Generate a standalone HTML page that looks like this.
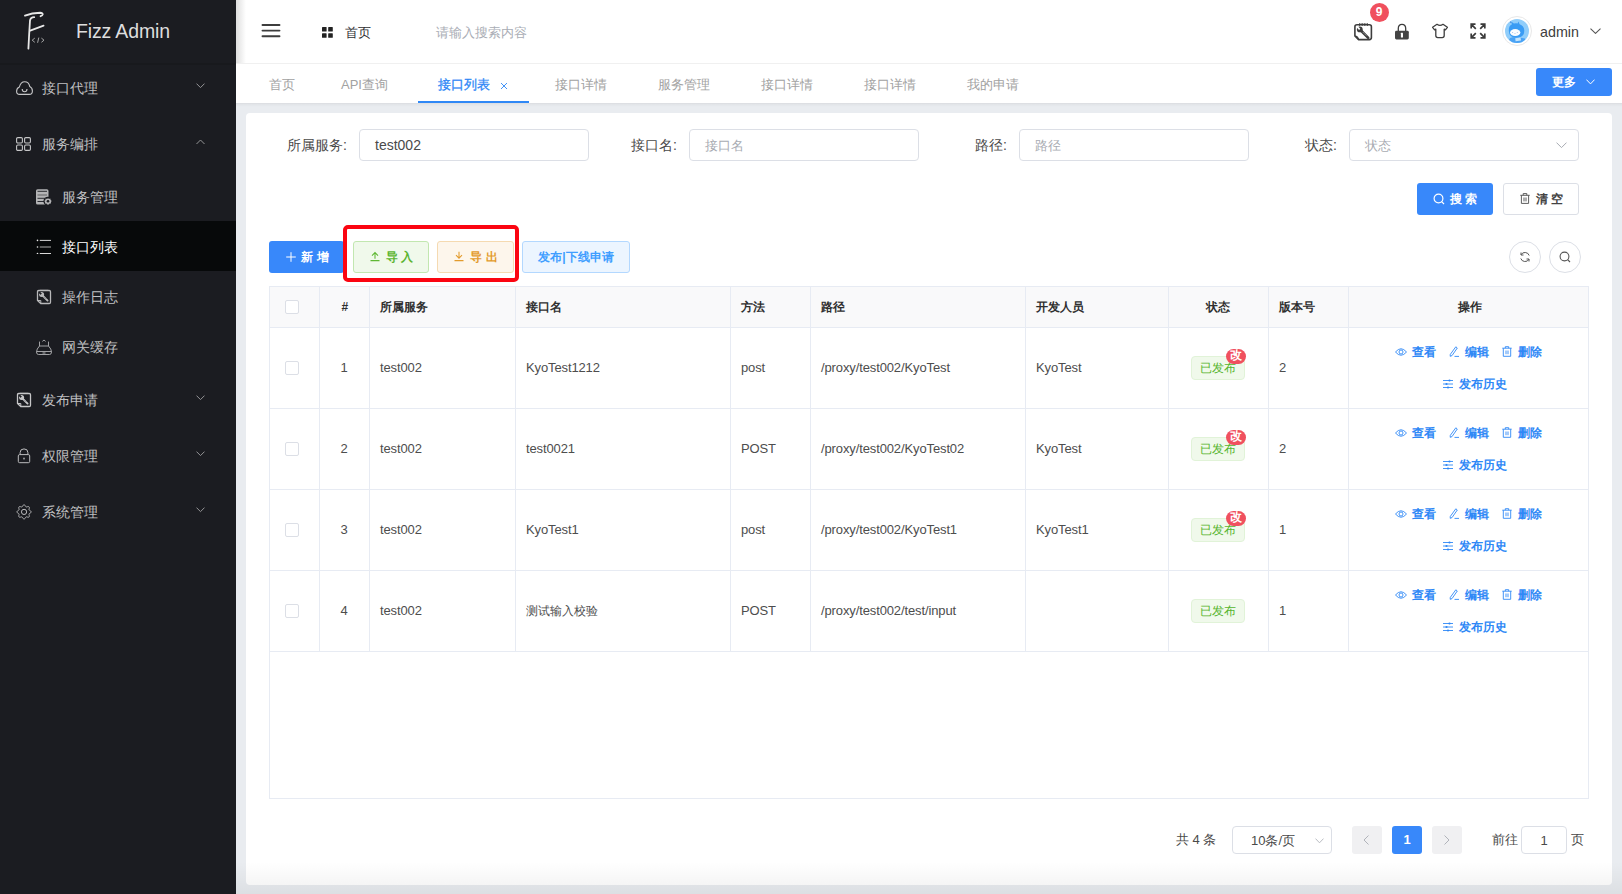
<!DOCTYPE html>
<html><head><meta charset="utf-8">
<style>
*{box-sizing:border-box;margin:0;padding:0}
html,body{width:1622px;height:894px;overflow:hidden;background:#e9ecf0;font-family:"Liberation Sans",sans-serif;color:#303133}
.abs{position:absolute}
#side{position:absolute;left:0;top:0;width:236px;height:894px;background:#1b1c21}
#logo{position:absolute;left:0;top:0;width:236px;height:65px;background:#1b1c21;border-bottom:2px solid #18191d}
#logo .t{position:absolute;left:76px;top:20px;font-size:19.5px;letter-spacing:-0.15px;color:#dedede;white-space:nowrap}
.mi{position:absolute;left:0;width:236px;font-size:14px;color:#c0c0c2;white-space:nowrap}
.mi .tx{position:absolute;top:0}
.mi svg{position:absolute}
.mi .ar{position:absolute;left:195px}
.sub.active{background:#07090a;color:#fff}
#header{position:absolute;left:236px;top:0;width:1386px;height:64px;background:#fff;border-bottom:1px solid #f0f0f0}
#tabs{position:absolute;left:236px;top:64px;width:1386px;height:40px;background:#fff;border-bottom:1px solid #dddfe3}
.tab{position:absolute;top:76px;font-size:13px;color:#a2a2a2;white-space:nowrap;line-height:16px}
#card{position:absolute;left:246px;top:113px;width:1366px;height:772px;background:#fff;border-radius:4px}
.lbl{position:absolute;font-size:14px;color:#4a4a4a;white-space:nowrap;line-height:16px}
.inp{position:absolute;height:32px;border:1px solid #dcdfe6;border-radius:4px;background:#fff;font-size:14px;line-height:31px;padding-left:15px;white-space:nowrap}
.ph{color:#a8abb2;font-size:13px !important}
.btn{position:absolute;height:32px;border-radius:3px;font-size:12px;line-height:30px;text-align:center;white-space:nowrap;border:1px solid transparent}
table{border-collapse:collapse}
.cell{position:absolute;font-size:13px;color:#4d4d4d;white-space:nowrap;line-height:16px;letter-spacing:-0.12px}
.hcell{position:absolute;font-size:12px;color:#2f2f2f;font-weight:bold;white-space:nowrap;line-height:16px}
.vl{position:absolute;width:1px;background:#e6e9f0}
.hl{position:absolute;height:1px;background:#e6e9f0}
.cb{position:absolute;width:14px;height:14px;border:1px solid #dcdfe6;border-radius:2px;background:#fff}
.tag{position:absolute;width:54px;height:24px;background:#f0f9eb;border:1px solid #e1f3d8;border-radius:4px;color:#56b52e;font-size:12px;line-height:22px;text-align:center}
.bdg{position:absolute;width:20px;height:15px;border-radius:7.5px;background:#f0505e;color:#fff;font-size:12px;font-weight:bold;line-height:13px;text-align:center;overflow:hidden}
.act{position:absolute;font-size:12px;font-weight:bold;color:#2f88f6;white-space:nowrap;line-height:16px}
</style></head><body>
<div id="side">
  <div id="logo">
    <svg class="abs" style="left:23px;top:11px" width="24" height="40" viewBox="0 0 24 40">
      <path d="M2 4.6 Q9 1.8 17.2 1.7 Q19.8 1.8 19.7 3.4 Q19.4 4.7 17.6 5.2" stroke="#e8e8e8" stroke-width="1.9" fill="none" stroke-linecap="round"/>
      <path d="M11.2 6.2 Q7.6 6.2 7 9.5 Q6.2 22 5.4 37.6" stroke="#e8e8e8" stroke-width="1.8" fill="none" stroke-linecap="round"/>
      <path d="M7.2 19.6 L20.6 14.6" stroke="#e8e8e8" stroke-width="1.7" fill="none" stroke-linecap="round"/>
      <path d="M11.8 27.1 L9.2 29.2 L11.8 31.3 M15.8 26.6 L14.6 31.8 M18.4 27.1 L21 29.2 L18.4 31.3" stroke="#ababab" stroke-width="0.95" fill="none"/>
    </svg>
    <div class="t">Fizz Admin</div>
  </div>
  <div class="mi" style="top:59px;height:56px">
    <svg style="left:15.5px;top:21.5px" width="17" height="15" viewBox="0 0 17 15"><path d="M3.6 13.4 Q0.6 13.4 0.6 10.2 Q0.6 7.2 3.4 6 Q4.6 0.8 8.7 0.8 Q12.8 0.8 13.8 5.6 Q16.4 7 16.4 10 Q16.4 13.4 13.2 13.4 Z" fill="none" stroke="#c6c6c8" stroke-width="1.1" stroke-linejoin="round"/><path d="M6.2 8 Q6.3 10.8 8.6 10.8 Q10.9 10.8 11 8" fill="none" stroke="#c6c6c8" stroke-width="1.1"/></svg>
    <span class="tx" style="left:42px;top:21px">接口代理</span>
    <svg class="ar" style="top:24px;left:195.5px" width="9" height="6" viewBox="0 0 9 6"><path d="M0.5 0.6 L4.5 4.6 L8.5 0.6" fill="none" stroke="#949496" stroke-width="1"/></svg>
  </div>
  <div class="mi" style="top:115px;height:56px">
    <svg style="left:16px;top:22px" width="15" height="14" viewBox="0 0 15 14"><rect x="0.6" y="0.6" width="5.8" height="5.4" rx="1.2" fill="none" stroke="#c6c6c8" stroke-width="1.1"/><rect x="8.6" y="0.6" width="5.8" height="5.4" rx="1.2" fill="none" stroke="#c6c6c8" stroke-width="1.1"/><rect x="0.6" y="8" width="5.8" height="5.4" rx="1.2" fill="none" stroke="#c6c6c8" stroke-width="1.1"/><rect x="8.6" y="8" width="5.8" height="5.4" rx="1.2" fill="none" stroke="#c6c6c8" stroke-width="1.1"/></svg>
    <span class="tx" style="left:42px;top:21px">服务编排</span>
    <svg class="ar" style="top:24px;left:195.5px" width="9" height="6" viewBox="0 0 9 6"><path d="M0.5 5 L4.5 1 L8.5 5" fill="none" stroke="#949496" stroke-width="1"/></svg>
  </div>
  <div class="mi sub" style="top:171px;height:50px">
    <svg style="left:35px;top:18px" width="18" height="16" viewBox="0 0 18 16"><rect x="1" y="0.3" width="12.5" height="15.3" rx="1.6" fill="#b4b4b6"/><path d="M2.5 2.3 H12 M2.5 9.3 H12 M2.5 12.5 H10" stroke="#1b1c21" stroke-width="0.9"/><rect x="2.5" y="5" width="9.5" height="2" fill="#8a8a8c"/><circle cx="13" cy="12.3" r="4.6" fill="#1b1c21"/><path d="M13 8.9 L13.9 9.9 L15.3 9.6 L15.6 11 L16.7 11.9 L15.9 13 L16 14.4 L14.6 14.6 L13.8 15.7 L13 15.2 L12.2 15.7 L11.4 14.6 L10 14.4 L10.1 13 L9.3 11.9 L10.4 11 L10.7 9.6 L12.1 9.9 Z" fill="#b4b4b6"/><circle cx="13" cy="12.3" r="1.3" fill="#1b1c21"/></svg>
    <span class="tx" style="left:62px;top:18px">服务管理</span>
  </div>
  <div class="mi sub active" style="top:221px;height:50px">
    <svg style="left:36px;top:18px" width="16" height="15" viewBox="0 0 16 15"><circle cx="1.5" cy="1.4" r="0.8" fill="#e6e6e6"/><circle cx="1.5" cy="8" r="0.8" fill="#e6e6e6"/><circle cx="1.5" cy="14.5" r="0.8" fill="#e6e6e6"/><path d="M3.8 1.4 H15 M3.8 14.5 H15" stroke="#d8d8d8" stroke-width="1"/><path d="M3.8 8 H15" stroke="#888" stroke-width="1.3"/></svg>
    <span class="tx" style="left:62px;top:18px">接口列表</span>
  </div>
  <div class="mi sub" style="top:271px;height:50px">
    <svg style="left:36px;top:18px" width="16" height="16" viewBox="0 0 16 16"><path d="M5 0.6 V2 M7 0.6 V2 M9 0.6 V2 M11 0.6 V2" stroke="#b8b8ba" stroke-width="0.8"/><path d="M2.8 1.5 H13.2 Q14.5 1.5 14.5 2.8 V13.2 Q14.5 14.5 13.2 14.5 H4.8 L1.5 11.5 V2.8 Q1.5 1.5 2.8 1.5 Z" fill="none" stroke="#b8b8ba" stroke-width="1.3"/><path d="M1.5 11.5 H4.8 V14.5" fill="none" stroke="#b8b8ba" stroke-width="1"/><circle cx="5.6" cy="5.6" r="2.5" fill="#b8b8ba"/><path d="M3.4 3.4 L5.4 5.4" stroke="#1b1c21" stroke-width="1.5"/><path d="M6 6 L11.6 11.6" stroke="#b8b8ba" stroke-width="1.9" stroke-linecap="round"/><path d="M8 8.6 L8.6 8 M9.4 10 L10 9.4" stroke="#1b1c21" stroke-width="0.6"/></svg>
    <span class="tx" style="left:62px;top:18px">操作日志</span>
  </div>
  <div class="mi sub" style="top:321px;height:50px">
    <svg style="left:36px;top:18px" width="16" height="16" viewBox="0 0 16 16"><path d="M6.4 2.4 L8 1 L9.6 2.4" fill="none" stroke="#b0b0b2" stroke-width="0.9"/><path d="M3.5 2.6 V7 M12.5 2.6 V7" stroke="#b0b0b2" stroke-width="0.9"/><path d="M3.5 7 H12.5 Q15.5 10 15.5 13 Q15.5 15.5 13.5 15.5 H2.5 Q0.5 15.5 0.5 13 Q0.5 10 3.5 7 Z" fill="none" stroke="#b0b0b2" stroke-width="0.9"/><path d="M0.8 12.5 H15.2" stroke="#b0b0b2" stroke-width="0.9"/><path d="M6.5 14 H9.5" stroke="#b0b0b2" stroke-width="1"/></svg>
    <span class="tx" style="left:62px;top:18px">网关缓存</span>
  </div>
  <div class="mi" style="top:371px;height:56px">
    <svg style="left:16px;top:21px" width="16" height="16" viewBox="0 0 16 16"><path d="M5 0.6 V2 M7 0.6 V2 M9 0.6 V2 M11 0.6 V2" stroke="#c6c6c8" stroke-width="0.8"/><path d="M2.8 1.5 H13.2 Q14.5 1.5 14.5 2.8 V13.2 Q14.5 14.5 13.2 14.5 H4.8 L1.5 11.5 V2.8 Q1.5 1.5 2.8 1.5 Z" fill="none" stroke="#c6c6c8" stroke-width="1.3"/><path d="M1.5 11.5 H4.8 V14.5" fill="none" stroke="#c6c6c8" stroke-width="1"/><circle cx="5.6" cy="5.6" r="2.5" fill="#c6c6c8"/><path d="M3.4 3.4 L5.4 5.4" stroke="#1b1c21" stroke-width="1.5"/><path d="M6 6 L11.6 11.6" stroke="#c6c6c8" stroke-width="1.9" stroke-linecap="round"/><path d="M8 8.6 L8.6 8 M9.4 10 L10 9.4" stroke="#1b1c21" stroke-width="0.6"/></svg>
    <span class="tx" style="left:42px;top:21px">发布申请</span>
    <svg class="ar" style="top:24px;left:195.5px" width="9" height="6" viewBox="0 0 9 6"><path d="M0.5 0.6 L4.5 4.6 L8.5 0.6" fill="none" stroke="#949496" stroke-width="1"/></svg>
  </div>
  <div class="mi" style="top:427px;height:56px">
    <svg style="left:17px;top:21px" width="14" height="16" viewBox="0 0 14 16"><path d="M3.1 6.6 V4.6 Q3.1 0.9 7 0.9 Q10.9 0.9 10.9 4.6 V6.6" fill="none" stroke="#bdbdbf" stroke-width="1"/><rect x="1.3" y="6.6" width="11.4" height="8.1" rx="1.3" fill="none" stroke="#bdbdbf" stroke-width="1"/><rect x="6.3" y="9.7" width="1.4" height="1.7" fill="#bdbdbf"/></svg>
    <span class="tx" style="left:42px;top:21px">权限管理</span>
    <svg class="ar" style="top:24px;left:195.5px" width="9" height="6" viewBox="0 0 9 6"><path d="M0.5 0.6 L4.5 4.6 L8.5 0.6" fill="none" stroke="#949496" stroke-width="1"/></svg>
  </div>
  <div class="mi" style="top:483px;height:56px">
    <svg style="left:16px;top:21px" width="16" height="16" viewBox="0 0 16 16"><path d="M8.05 0.80 L8.33 0.85 L8.59 0.98 L8.84 1.20 L9.07 1.47 L9.27 1.77 L9.45 2.08 L9.61 2.37 L9.77 2.61 L9.93 2.79 L10.12 2.91 L10.33 2.96 L10.58 2.94 L10.86 2.88 L11.18 2.79 L11.52 2.70 L11.88 2.63 L12.23 2.60 L12.56 2.62 L12.84 2.72 L13.07 2.88 L13.23 3.11 L13.33 3.39 L13.35 3.72 L13.32 4.07 L13.25 4.43 L13.16 4.77 L13.07 5.09 L13.01 5.37 L12.99 5.62 L13.04 5.83 L13.16 6.02 L13.34 6.18 L13.58 6.34 L13.87 6.50 L14.18 6.68 L14.48 6.88 L14.75 7.11 L14.97 7.36 L15.10 7.62 L15.15 7.90 L15.10 8.18 L14.97 8.44 L14.75 8.69 L14.48 8.92 L14.18 9.12 L13.87 9.30 L13.58 9.46 L13.34 9.62 L13.16 9.78 L13.04 9.97 L12.99 10.18 L13.01 10.43 L13.07 10.71 L13.16 11.03 L13.25 11.37 L13.32 11.73 L13.35 12.08 L13.33 12.41 L13.23 12.69 L13.07 12.92 L12.84 13.08 L12.56 13.18 L12.23 13.20 L11.88 13.17 L11.52 13.10 L11.18 13.01 L10.86 12.92 L10.58 12.86 L10.33 12.84 L10.12 12.89 L9.93 13.01 L9.77 13.19 L9.61 13.43 L9.45 13.72 L9.27 14.03 L9.07 14.33 L8.84 14.60 L8.59 14.82 L8.33 14.95 L8.05 15.00 L7.77 14.95 L7.51 14.82 L7.26 14.60 L7.03 14.33 L6.83 14.03 L6.65 13.72 L6.49 13.43 L6.33 13.19 L6.17 13.01 L5.98 12.89 L5.77 12.84 L5.52 12.86 L5.24 12.92 L4.92 13.01 L4.58 13.10 L4.22 13.17 L3.87 13.20 L3.54 13.18 L3.26 13.08 L3.03 12.92 L2.87 12.69 L2.77 12.41 L2.75 12.08 L2.78 11.73 L2.85 11.37 L2.94 11.03 L3.03 10.71 L3.09 10.43 L3.11 10.18 L3.06 9.97 L2.94 9.78 L2.76 9.62 L2.52 9.46 L2.23 9.30 L1.92 9.12 L1.62 8.92 L1.35 8.69 L1.13 8.44 L1.00 8.18 L0.95 7.90 L1.00 7.62 L1.13 7.36 L1.35 7.11 L1.62 6.88 L1.92 6.68 L2.23 6.50 L2.52 6.34 L2.76 6.18 L2.94 6.02 L3.06 5.83 L3.11 5.62 L3.09 5.37 L3.03 5.09 L2.94 4.77 L2.85 4.43 L2.78 4.07 L2.75 3.72 L2.77 3.39 L2.87 3.11 L3.03 2.88 L3.26 2.72 L3.54 2.62 L3.87 2.60 L4.22 2.63 L4.58 2.70 L4.92 2.79 L5.24 2.88 L5.52 2.94 L5.77 2.96 L5.98 2.91 L6.17 2.79 L6.33 2.61 L6.49 2.37 L6.65 2.08 L6.83 1.77 L7.03 1.47 L7.26 1.20 L7.51 0.98 L7.77 0.85 Z" fill="none" stroke="#bdbdbf" stroke-width="1"/><circle cx="8.05" cy="7.9" r="2.6" fill="none" stroke="#bdbdbf" stroke-width="1"/></svg>
    <span class="tx" style="left:42px;top:21px">系统管理</span>
    <svg class="ar" style="top:24px;left:195.5px" width="9" height="6" viewBox="0 0 9 6"><path d="M0.5 0.6 L4.5 4.6 L8.5 0.6" fill="none" stroke="#949496" stroke-width="1"/></svg>
  </div>
</div>
<div id="header">
  <div class="abs" style="left:0;top:0;width:10px;height:63px;background:linear-gradient(to right,rgba(0,0,0,0.13),rgba(0,0,0,0))"></div>
  <svg class="abs" style="left:25px;top:23px" width="20" height="16" viewBox="0 0 20 16"><path d="M1.5 2 H18.5 M1.5 7.6 H18.5 M1.5 13.2 H18.5" stroke="#3d3d3d" stroke-width="1.9" stroke-linecap="round"/></svg>
  <svg class="abs" style="left:86px;top:27px" width="11" height="11" viewBox="0 0 11 11"><rect x="0" y="0" width="4.6" height="4.6" rx="0.6" fill="#222"/><rect x="6.2" y="0" width="4.6" height="4.6" rx="0.6" fill="#222"/><rect x="0" y="6.2" width="4.6" height="4.6" rx="0.6" fill="#222"/><rect x="6.2" y="6.2" width="4.6" height="4.6" rx="0.6" fill="#222"/></svg>
  <div class="abs" style="left:109px;top:25px;font-size:13px;color:#303133;line-height:16px">首页</div>
  <div class="abs" style="left:200px;top:25px;font-size:13px;color:#a9adb5;line-height:16px">请输入搜索内容</div>
  <!-- right icons -->
  <svg class="abs" style="left:1118px;top:23px" width="19" height="18" viewBox="0 0 19 18"><path d="M3 1.8 H15.4 Q17.4 1.8 17.4 3.8 V14.6 Q17.4 16.6 15.4 16.6 H4.6 L0.9 13 V3.8 Q0.9 1.8 3 1.8 Z" fill="none" stroke="#3d3d3d" stroke-width="1.6" stroke-linejoin="round"/><path d="M1 13.2 Q3.8 13.4 4.6 16.5" fill="none" stroke="#3d3d3d" stroke-width="1.2"/><path d="M5.6 0.2 V3 M8.2 0.2 V3 M10.8 0.2 V3 M13.4 0.2 V3 M5.6 1.2 H13.4" stroke="#3d3d3d" stroke-width="0.9"/><circle cx="5.8" cy="6.4" r="2.9" fill="#3d3d3d"/><path d="M3.3 3.9 L5.7 6.3" stroke="#fff" stroke-width="1.7"/><path d="M7.4 8 L14.2 14.8" stroke="#3d3d3d" stroke-width="2.6" stroke-linecap="round"/><path d="M9.2 9.4 L10.2 10.4 M11.2 11.4 L12.2 12.4" stroke="#fff" stroke-width="0.7"/></svg>
  <div class="abs" style="left:1133.5px;top:2.5px;width:19px;height:19px;border-radius:10px;background:#f0505e;color:#fff;font-size:12px;font-weight:bold;line-height:19px;text-align:center">9</div>
  <svg class="abs" style="left:1158px;top:23px" width="16" height="18" viewBox="0 0 16 18"><path d="M4.3 8.4 V5.6 Q4.3 1.4 8 1.4 Q11.7 1.4 11.7 5.6 V8.4" fill="none" stroke="#3d3d3d" stroke-width="1.3"/><rect x="1" y="7.8" width="13.8" height="8.6" rx="1.4" fill="#444"/><rect x="6.9" y="9.8" width="2.1" height="4.6" rx="0.5" fill="#fff"/></svg>
  <svg class="abs" style="left:1195px;top:23px" width="18" height="16" viewBox="0 0 18 16"><path d="M6 1.3 Q9 3.6 12 1.3 L16.4 4.3 L14.4 6.8 L13.2 6.2 V12.6 Q13.2 14.6 11.2 14.6 H6.8 Q4.8 14.6 4.8 12.6 V6.2 L3.6 6.8 L1.6 4.3 Z" fill="none" stroke="#3d3d3d" stroke-width="1.3" stroke-linejoin="round"/></svg>
  <svg class="abs" style="left:1234px;top:23px" width="16" height="16" viewBox="0 0 16 16"><path d="M1.2 5.5 V1.2 H5.5 M1.2 1.2 L5.8 5.8 M10.5 1.2 H14.8 V5.5 M14.8 1.2 L10.2 5.8 M1.2 10.5 V14.8 H5.5 M1.2 14.8 L5.8 10.2 M14.8 10.5 V14.8 H10.5 M14.8 14.8 L10.2 10.2" fill="none" stroke="#3a3a3a" stroke-width="1.7"/></svg>
  <div class="abs" style="left:1266px;top:16px;width:30px;height:30px;border-radius:15px;background:#fff;border:1px solid #e8e8e8"></div>
  <div class="abs" style="left:1269px;top:19px;width:24px;height:24px;border-radius:12px;overflow:hidden"><svg width="24" height="24" viewBox="0 0 24 24" style="display:block"><g><rect width="24" height="24" fill="#90cdfa"/><path d="M3.8 11.5 Q3.6 6.5 7 5.2 L6.2 2.6 L8.8 4.6 Q11 4.1 12.6 4.5 L13.4 2.4 L14.6 5.2 Q19 6.6 19.3 11.5 Q19.3 16.5 15.5 18 Q11 19 7.5 18 Q3.9 16.5 3.8 11.5 Z" fill="#3a9cf4"/><ellipse cx="10.2" cy="13.6" rx="5.2" ry="3.5" fill="#fbfdff"/><path d="M7.4 13.2 L7.9 14 M12.2 13.2 L12.6 14 M9.6 14.6 Q10 15 10.4 14.6" stroke="#6b8fd0" stroke-width="0.6" fill="none"/><path d="M2.5 24 L5 19 Q9 17.5 14 18.5 L20 19.5 L21 24 Z" fill="#4aa3f5"/><path d="M10.2 19.2 L15.5 18.6 L16 21.6 L10.6 22.2 Z" fill="#c4e4fc"/><path d="M5 2.8 L6.3 3.6" stroke="#2b6fd0" stroke-width="0.9"/></g></svg></div>
  <div class="abs" style="left:1304px;top:23.5px;font-size:14.3px;color:#404040;line-height:17px">admin</div>
  <svg class="abs" style="left:1354px;top:28px" width="11" height="6" viewBox="0 0 11 6"><path d="M0.5 0.6 L5.5 5.4 L10.5 0.6" fill="none" stroke="#555" stroke-width="1.05"/></svg>
</div>
<div id="tabs">
  <div class="tab" style="left:33px;top:13px">首页</div>
  <div class="tab" style="left:105px;top:13px">API查询</div>
  <div class="tab" style="left:202px;top:13px;color:#2f88f6;-webkit-text-stroke:0.3px #2f88f6">接口列表</div>
  <svg class="abs" style="left:264px;top:18px" width="8" height="8" viewBox="0 0 8 8"><path d="M1 1 L7 7 M7 1 L1 7" stroke="#2f88f6" stroke-width="0.9"/></svg>
  <div class="abs" style="left:182px;top:37px;width:111px;height:2px;background:#2f88f6"></div>
  <div class="tab" style="left:319px;top:13px">接口详情</div>
  <div class="tab" style="left:422px;top:13px">服务管理</div>
  <div class="tab" style="left:525px;top:13px">接口详情</div>
  <div class="tab" style="left:628px;top:13px">接口详情</div>
  <div class="tab" style="left:731px;top:13px">我的申请</div>
  <div class="abs" style="left:1300px;top:4px;width:76px;height:28px;border-radius:3px;background:#3888fa;color:#fff;font-size:12px;font-weight:bold;line-height:28px;padding-left:16px">更多</div>
  <svg class="abs" style="left:1350px;top:15px" width="9" height="6" viewBox="0 0 9 6"><path d="M0.4 0.6 L4.5 4.9 L8.6 0.6" fill="none" stroke="#fff" stroke-width="1"/></svg>
</div>
<div id="card"></div>
<div class="lbl" style="left:287px;top:137px">所属服务:</div>
<div class="inp" style="left:359px;top:129px;width:230px;color:#4a4a4a">test002</div>
<div class="lbl" style="left:631px;top:137px">接口名:</div>
<div class="inp ph" style="left:689px;top:129px;width:230px">接口名</div>
<div class="lbl" style="left:975px;top:137px">路径:</div>
<div class="inp ph" style="left:1019px;top:129px;width:230px">路径</div>
<div class="lbl" style="left:1305px;top:137px">状态:</div>
<div class="inp ph" style="left:1349px;top:129px;width:230px">状态</div>
<svg class="abs" style="left:1556px;top:141.5px" width="11" height="7" viewBox="0 0 11 7"><path d="M0.5 0.6 L5.5 5.6 L10.5 0.6" fill="none" stroke="#a8abb2" stroke-width="1"/></svg>
<div class="btn" style="left:1417px;top:183px;width:76px;background:#3888fa;color:#fff;font-weight:bold;padding-left:17px">搜 索</div>
<svg class="abs" style="left:1433px;top:193px" width="12" height="12" viewBox="0 0 12 12"><circle cx="5.5" cy="5.5" r="4.4" fill="none" stroke="#fff" stroke-width="1.2"/><path d="M8.6 8.6 L11 11" stroke="#fff" stroke-width="1.2"/></svg>
<div class="btn" style="left:1503px;top:183px;width:76px;background:#fff;border-color:#dcdfe6;color:#444;font-weight:bold;padding-left:17px">清 空</div>
<svg class="abs" style="left:1520px;top:193px" width="10" height="11" viewBox="0 0 10 11"><path d="M0.3 2.3 H9.7 M3.2 2.3 V0.6 H6.8 V2.3 M1.4 2.3 V10.4 H8.6 V2.3 M4 4.5 V8.4 M6 4.5 V8.4" fill="none" stroke="#555" stroke-width="0.95"/></svg>
<div class="btn" style="left:269px;top:241px;width:75px;height:32px;background:#3888fa;color:#fff;font-weight:bold;padding-left:17px">新 增</div>
<svg class="abs" style="left:286px;top:252px" width="10" height="10" viewBox="0 0 10 10"><path d="M5 0.2 V9.8 M0.2 5 H9.8" stroke="#fff" stroke-width="1"/></svg>
<div class="btn" style="left:353px;top:241px;width:76px;height:32px;background:#f0f9eb;border-color:#c2e7b0;color:#5cb531;font-weight:bold;padding-left:17px">导 入</div>
<svg class="abs" style="left:370px;top:251px" width="10" height="11" viewBox="0 0 10 11"><path d="M0.5 9.6 H9.5 M5 7.8 V1.6 M2 4.6 L5 1.6 L8 4.6" fill="none" stroke="#5fb834" stroke-width="1.05"/></svg>
<div class="btn" style="left:437px;top:241px;width:77px;height:32px;background:#fdf6ec;border-color:#f5dab1;color:#e39b2d;font-weight:bold;padding-left:17px">导 出</div>
<svg class="abs" style="left:454px;top:251px" width="10" height="11" viewBox="0 0 10 11"><path d="M0.5 9.6 H9.5 M5 0.8 V7.2 M2 4.2 L5 7.2 L8 4.2" fill="none" stroke="#e39b2d" stroke-width="1.05"/></svg>
<div class="btn" style="left:522px;top:241px;width:108px;height:32px;background:#ecf5ff;border-color:#b3d8ff;color:#409eff;font-weight:bold">发布|下线申请</div>
<div class="abs" style="left:343px;top:225px;width:176px;height:57px;border:4px solid #fb0511;border-radius:5px"></div>
<div class="abs" style="left:1509px;top:241px;width:32px;height:32px;border-radius:16px;border:1px solid #dcdfe6;background:#fff"></div>
<svg class="abs" style="left:1519px;top:251px" width="12" height="12" viewBox="0 0 12 12"><path d="M10.2 4.5 A4.5 4.5 0 0 0 2 3.8 M1.8 7.5 A4.5 4.5 0 0 0 10 8.2" fill="none" stroke="#555" stroke-width="1"/><path d="M2 1.5 V4 H4.5 M10 10.5 V8 H7.5" fill="none" stroke="#555" stroke-width="1"/></svg>
<div class="abs" style="left:1549px;top:241px;width:32px;height:32px;border-radius:16px;border:1px solid #dcdfe6;background:#fff"></div>
<svg class="abs" style="left:1559px;top:251px" width="12" height="12" viewBox="0 0 12 12"><circle cx="5.5" cy="5.5" r="4.4" fill="none" stroke="#555" stroke-width="1.1"/><path d="M8.6 8.6 L11 11" stroke="#555" stroke-width="1.1"/></svg>
<div class="abs" style="left:269px;top:286px;width:1320px;height:41px;background:#f9f9fa"></div>
<div class="abs" style="left:269px;top:286px;width:1320px;height:513px;border:1px solid #e7ebf3"></div>
<div class="vl" style="left:319px;top:286px;height:365px;background:#e7ebf3"></div>
<div class="vl" style="left:369px;top:286px;height:365px;background:#e7ebf3"></div>
<div class="vl" style="left:515px;top:286px;height:365px;background:#e7ebf3"></div>
<div class="vl" style="left:730px;top:286px;height:365px;background:#e7ebf3"></div>
<div class="vl" style="left:810px;top:286px;height:365px;background:#e7ebf3"></div>
<div class="vl" style="left:1025px;top:286px;height:365px;background:#e7ebf3"></div>
<div class="vl" style="left:1168px;top:286px;height:365px;background:#e7ebf3"></div>
<div class="vl" style="left:1268px;top:286px;height:365px;background:#e7ebf3"></div>
<div class="vl" style="left:1348px;top:286px;height:365px;background:#e7ebf3"></div>
<div class="hl" style="left:269px;top:327px;width:1320px;background:#e7ebf3"></div>
<div class="hl" style="left:269px;top:408px;width:1320px;background:#e7ebf3"></div>
<div class="hl" style="left:269px;top:489px;width:1320px;background:#e7ebf3"></div>
<div class="hl" style="left:269px;top:570px;width:1320px;background:#e7ebf3"></div>
<div class="hl" style="left:269px;top:651px;width:1320px;background:#e7ebf3"></div>
<div class="cb" style="left:285px;top:300px"></div>
<div class="hcell" style="left:341.5px;top:299px">#</div>
<div class="hcell" style="left:380px;top:299px">所属服务</div>
<div class="hcell" style="left:526px;top:299px">接口名</div>
<div class="hcell" style="left:741px;top:299px">方法</div>
<div class="hcell" style="left:821px;top:299px">路径</div>
<div class="hcell" style="left:1036px;top:299px">开发人员</div>
<div class="hcell" style="left:1279px;top:299px">版本号</div>
<div class="hcell" style="left:1206px;top:299px">状态</div>
<div class="hcell" style="left:1457.5px;top:299px">操作</div>
<div class="cb" style="left:285px;top:361px"></div>
<div class="cell" style="left:319px;width:50px;text-align:center;top:360px">1</div>
<div class="cell" style="left:380px;top:360px">test002</div>
<div class="cell" style="left:526px;top:360px">KyoTest1212</div>
<div class="cell" style="left:741px;top:360px">post</div>
<div class="cell" style="left:821px;top:360px">/proxy/test002/KyoTest</div>
<div class="cell" style="left:1036px;top:360px">KyoTest</div>
<div class="cell" style="left:1279px;top:360px">2</div>
<div class="tag" style="left:1191px;top:356px">已发布</div>
<div class="bdg" style="left:1226px;top:349px">改</div>
<svg class="abs" style="left:1395px;top:347px" width="12" height="10" viewBox="0 0 12 10"><path d="M0.5 5 Q6 -1.5 11.5 5 Q6 11.5 0.5 5 Z" fill="none" stroke="#2f88f6" stroke-width="0.9"/><circle cx="6" cy="5" r="2" fill="none" stroke="#2f88f6" stroke-width="0.9"/></svg>
<div class="act" style="left:1412px;top:344px">查看</div>
<svg class="abs" style="left:1449px;top:346px" width="11" height="11" viewBox="0 0 11 11"><path d="M6.8 0.8 L8.3 2 L3 9.6 L1.2 10.3 L1.3 8.4 Z" fill="none" stroke="#2f88f6" stroke-width="0.9" stroke-linejoin="round"/><path d="M5.5 10.4 H10" stroke="#2f88f6" stroke-width="0.9"/></svg>
<div class="act" style="left:1465px;top:344px">编辑</div>
<svg class="abs" style="left:1502px;top:346px" width="10" height="11" viewBox="0 0 10 11"><path d="M0.3 2.2 H9.7 M3.3 2.2 V0.7 H6.7 V2.2 M1.3 2.2 V10.3 H8.7 V2.2 M4 4.5 V8.2 M6 4.5 V8.2" fill="none" stroke="#2f88f6" stroke-width="0.9"/></svg>
<div class="act" style="left:1518px;top:344px">删除</div>
<svg class="abs" style="left:1443px;top:379px" width="10" height="10" viewBox="0 0 10 10"><path d="M0 1.5 H10 M0 5 H10 M0 8.5 H10" stroke="#2f88f6" stroke-width="0.9"/><circle cx="6.5" cy="1.5" r="1.1" fill="#2f88f6"/><circle cx="3.5" cy="5" r="1.1" fill="#2f88f6"/><circle cx="5" cy="8.5" r="1.1" fill="#2f88f6"/></svg>
<div class="act" style="left:1459px;top:376px">发布历史</div>
<div class="cb" style="left:285px;top:442px"></div>
<div class="cell" style="left:319px;width:50px;text-align:center;top:441px">2</div>
<div class="cell" style="left:380px;top:441px">test002</div>
<div class="cell" style="left:526px;top:441px">test0021</div>
<div class="cell" style="left:741px;top:441px">POST</div>
<div class="cell" style="left:821px;top:441px">/proxy/test002/KyoTest02</div>
<div class="cell" style="left:1036px;top:441px">KyoTest</div>
<div class="cell" style="left:1279px;top:441px">2</div>
<div class="tag" style="left:1191px;top:437px">已发布</div>
<div class="bdg" style="left:1226px;top:430px">改</div>
<svg class="abs" style="left:1395px;top:428px" width="12" height="10" viewBox="0 0 12 10"><path d="M0.5 5 Q6 -1.5 11.5 5 Q6 11.5 0.5 5 Z" fill="none" stroke="#2f88f6" stroke-width="0.9"/><circle cx="6" cy="5" r="2" fill="none" stroke="#2f88f6" stroke-width="0.9"/></svg>
<div class="act" style="left:1412px;top:425px">查看</div>
<svg class="abs" style="left:1449px;top:427px" width="11" height="11" viewBox="0 0 11 11"><path d="M6.8 0.8 L8.3 2 L3 9.6 L1.2 10.3 L1.3 8.4 Z" fill="none" stroke="#2f88f6" stroke-width="0.9" stroke-linejoin="round"/><path d="M5.5 10.4 H10" stroke="#2f88f6" stroke-width="0.9"/></svg>
<div class="act" style="left:1465px;top:425px">编辑</div>
<svg class="abs" style="left:1502px;top:427px" width="10" height="11" viewBox="0 0 10 11"><path d="M0.3 2.2 H9.7 M3.3 2.2 V0.7 H6.7 V2.2 M1.3 2.2 V10.3 H8.7 V2.2 M4 4.5 V8.2 M6 4.5 V8.2" fill="none" stroke="#2f88f6" stroke-width="0.9"/></svg>
<div class="act" style="left:1518px;top:425px">删除</div>
<svg class="abs" style="left:1443px;top:460px" width="10" height="10" viewBox="0 0 10 10"><path d="M0 1.5 H10 M0 5 H10 M0 8.5 H10" stroke="#2f88f6" stroke-width="0.9"/><circle cx="6.5" cy="1.5" r="1.1" fill="#2f88f6"/><circle cx="3.5" cy="5" r="1.1" fill="#2f88f6"/><circle cx="5" cy="8.5" r="1.1" fill="#2f88f6"/></svg>
<div class="act" style="left:1459px;top:457px">发布历史</div>
<div class="cb" style="left:285px;top:523px"></div>
<div class="cell" style="left:319px;width:50px;text-align:center;top:522px">3</div>
<div class="cell" style="left:380px;top:522px">test002</div>
<div class="cell" style="left:526px;top:522px">KyoTest1</div>
<div class="cell" style="left:741px;top:522px">post</div>
<div class="cell" style="left:821px;top:522px">/proxy/test002/KyoTest1</div>
<div class="cell" style="left:1036px;top:522px">KyoTest1</div>
<div class="cell" style="left:1279px;top:522px">1</div>
<div class="tag" style="left:1191px;top:518px">已发布</div>
<div class="bdg" style="left:1226px;top:511px">改</div>
<svg class="abs" style="left:1395px;top:509px" width="12" height="10" viewBox="0 0 12 10"><path d="M0.5 5 Q6 -1.5 11.5 5 Q6 11.5 0.5 5 Z" fill="none" stroke="#2f88f6" stroke-width="0.9"/><circle cx="6" cy="5" r="2" fill="none" stroke="#2f88f6" stroke-width="0.9"/></svg>
<div class="act" style="left:1412px;top:506px">查看</div>
<svg class="abs" style="left:1449px;top:508px" width="11" height="11" viewBox="0 0 11 11"><path d="M6.8 0.8 L8.3 2 L3 9.6 L1.2 10.3 L1.3 8.4 Z" fill="none" stroke="#2f88f6" stroke-width="0.9" stroke-linejoin="round"/><path d="M5.5 10.4 H10" stroke="#2f88f6" stroke-width="0.9"/></svg>
<div class="act" style="left:1465px;top:506px">编辑</div>
<svg class="abs" style="left:1502px;top:508px" width="10" height="11" viewBox="0 0 10 11"><path d="M0.3 2.2 H9.7 M3.3 2.2 V0.7 H6.7 V2.2 M1.3 2.2 V10.3 H8.7 V2.2 M4 4.5 V8.2 M6 4.5 V8.2" fill="none" stroke="#2f88f6" stroke-width="0.9"/></svg>
<div class="act" style="left:1518px;top:506px">删除</div>
<svg class="abs" style="left:1443px;top:541px" width="10" height="10" viewBox="0 0 10 10"><path d="M0 1.5 H10 M0 5 H10 M0 8.5 H10" stroke="#2f88f6" stroke-width="0.9"/><circle cx="6.5" cy="1.5" r="1.1" fill="#2f88f6"/><circle cx="3.5" cy="5" r="1.1" fill="#2f88f6"/><circle cx="5" cy="8.5" r="1.1" fill="#2f88f6"/></svg>
<div class="act" style="left:1459px;top:538px">发布历史</div>
<div class="cb" style="left:285px;top:604px"></div>
<div class="cell" style="left:319px;width:50px;text-align:center;top:603px">4</div>
<div class="cell" style="left:380px;top:603px">test002</div>
<div class="cell" style="left:526px;top:603px;font-size:12px;letter-spacing:0">测试输入校验</div>
<div class="cell" style="left:741px;top:603px">POST</div>
<div class="cell" style="left:821px;top:603px">/proxy/test002/test/input</div>
<div class="cell" style="left:1036px;top:603px"></div>
<div class="cell" style="left:1279px;top:603px">1</div>
<div class="tag" style="left:1191px;top:599px">已发布</div>
<svg class="abs" style="left:1395px;top:590px" width="12" height="10" viewBox="0 0 12 10"><path d="M0.5 5 Q6 -1.5 11.5 5 Q6 11.5 0.5 5 Z" fill="none" stroke="#2f88f6" stroke-width="0.9"/><circle cx="6" cy="5" r="2" fill="none" stroke="#2f88f6" stroke-width="0.9"/></svg>
<div class="act" style="left:1412px;top:587px">查看</div>
<svg class="abs" style="left:1449px;top:589px" width="11" height="11" viewBox="0 0 11 11"><path d="M6.8 0.8 L8.3 2 L3 9.6 L1.2 10.3 L1.3 8.4 Z" fill="none" stroke="#2f88f6" stroke-width="0.9" stroke-linejoin="round"/><path d="M5.5 10.4 H10" stroke="#2f88f6" stroke-width="0.9"/></svg>
<div class="act" style="left:1465px;top:587px">编辑</div>
<svg class="abs" style="left:1502px;top:589px" width="10" height="11" viewBox="0 0 10 11"><path d="M0.3 2.2 H9.7 M3.3 2.2 V0.7 H6.7 V2.2 M1.3 2.2 V10.3 H8.7 V2.2 M4 4.5 V8.2 M6 4.5 V8.2" fill="none" stroke="#2f88f6" stroke-width="0.9"/></svg>
<div class="act" style="left:1518px;top:587px">删除</div>
<svg class="abs" style="left:1443px;top:622px" width="10" height="10" viewBox="0 0 10 10"><path d="M0 1.5 H10 M0 5 H10 M0 8.5 H10" stroke="#2f88f6" stroke-width="0.9"/><circle cx="6.5" cy="1.5" r="1.1" fill="#2f88f6"/><circle cx="3.5" cy="5" r="1.1" fill="#2f88f6"/><circle cx="5" cy="8.5" r="1.1" fill="#2f88f6"/></svg>
<div class="act" style="left:1459px;top:619px">发布历史</div>
<div class="lbl" style="left:1176px;top:832px;font-size:13px">共 4 条</div>
<div class="inp" style="left:1232px;top:826px;width:100px;height:28px;line-height:27px;padding-left:18px;color:#4a4a4a;font-size:13px">10条/页</div>
<svg class="abs" style="left:1315px;top:838px" width="9" height="6" viewBox="0 0 9 6"><path d="M0.5 0.6 L4.5 4.8 L8.5 0.6" fill="none" stroke="#b4b7be" stroke-width="0.95"/></svg>
<div class="abs" style="left:1352px;top:826px;width:30px;height:28px;border-radius:3px;background:#f0f0f2"></div>
<svg class="abs" style="left:1363px;top:834.5px" width="6" height="10" viewBox="0 0 6 10"><path d="M5.5 0.5 L1 5 L5.5 9.5" fill="none" stroke="#b0b3ba" stroke-width="1"/></svg>
<div class="abs" style="left:1392px;top:826px;width:30px;height:28px;border-radius:3px;background:#3888fa;color:#fff;font-weight:bold;font-size:13px;line-height:28px;text-align:center">1</div>
<div class="abs" style="left:1432px;top:826px;width:30px;height:28px;border-radius:3px;background:#f0f0f2"></div>
<svg class="abs" style="left:1444px;top:834.5px" width="6" height="10" viewBox="0 0 6 10"><path d="M0.5 0.5 L5 5 L0.5 9.5" fill="none" stroke="#b0b3ba" stroke-width="1"/></svg>
<div class="lbl" style="left:1492px;top:832px;font-size:13px">前往</div>
<div class="inp" style="left:1521px;top:826px;width:46px;height:28px;line-height:27px;padding-left:0;text-align:center;color:#4a4a4a;font-size:13px">1</div>
<div class="lbl" style="left:1571px;top:832px;font-size:13px">页</div>
<div class="abs tabshadow" style="left:236px;top:104px;width:1386px;height:3px;background:linear-gradient(to bottom,rgba(0,0,0,0.035),rgba(0,0,0,0))"></div>
<div class="abs" style="left:236px;top:862px;width:1386px;height:32px;background:linear-gradient(to bottom,rgba(0,0,0,0),rgba(0,0,0,0.055))"></div>
</body></html>
